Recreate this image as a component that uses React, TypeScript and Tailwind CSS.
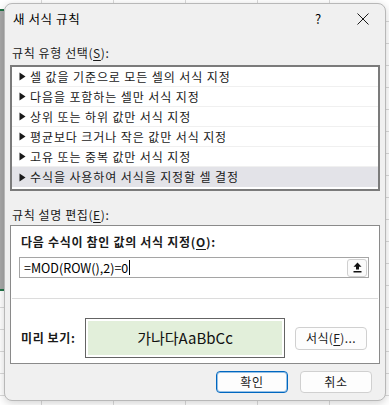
import React from "react";

const rows = [
  "셀 값을 기준으로 모든 셀의 서식 지정",
  "다음을 포함하는 셀만 서식 지정",
  "상위 또는 하위 값만 서식 지정",
  "평균보다 크거나 작은 값만 서식 지정",
  "고유 또는 중복 값만 서식 지정",
  "수식을 사용하여 서식을 지정할 셀 결정",
];

function Tri() {
  return (
    <svg width="7" height="9" viewBox="0 0 7 9" className="shrink-0">
      <path d="M0.5 0.5 L6.5 4.5 L0.5 8.5 Z" fill="#1a1a1a" />
    </svg>
  );
}

export default function App() {
  return (
    <div className="relative w-[389px] h-[405px] overflow-hidden bg-white bg-[linear-gradient(to_right,#dadada_1px,transparent_1px),linear-gradient(to_bottom,#dadada_1px,transparent_1px)] bg-[size:72px_22px] bg-[position:41px_21px] pt-[3px] pl-[4px] font-['Noto_Sans_CJK_KR','Noto_Sans',sans-serif] text-[12px] text-[#1a1a1a]">
      <div className="absolute left-0 top-[9px] w-[4px] h-[282px] bg-[#a8a8a8] border-y-2 border-[#217346]" />
      <div className="relative w-[382px] h-[398px] rounded-[8px] border border-[#b8b8b8] bg-[#f0f0f0] shadow-[0_2px_8px_rgba(0,0,0,0.18)] flex flex-col">
        {/* title bar */}
        <div className="h-[30px] flex items-center shrink-0">
          <span className="pl-[8px] leading-[16px] text-[12.5px] tracking-[0.6px] text-black">새 서식 규칙</span>
          <div className="ml-auto flex items-center h-full">
            <span className="w-[20px] text-center leading-[16px] text-[13px] text-black">?</span>
            <div className="w-[45px] ml-[12px] h-full flex items-center justify-center">
              <svg width="12" height="12" viewBox="0 0 12 12">
                <path d="M0.5 0.5 L11.5 11.5 M11.5 0.5 L0.5 11.5" stroke="#1a1a1a" strokeWidth="1" />
              </svg>
            </div>
          </div>
        </div>

        <div className="px-[5px] flex flex-col">
          <div className="mt-[11px] ml-[2px] leading-[16px] tracking-[0.6px]">
            규칙 유형 선택(<span className="underline underline-offset-2">S</span>):
          </div>
          <div className="mt-[4px] h-[126px] border-2 border-[#7b7b7b] bg-white flex flex-col">
            {rows.map((r, i) => (
              <div
                key={r}
                className={
                  i === rows.length - 1
                    ? "h-[20px] flex items-center gap-[4px] pl-[7px] bg-[#e3e3e8]"
                    : "h-[20px] flex items-center gap-[4px] pl-[7px] border-b border-[#f0f0f0]"
                }
              >
                <Tri />
                <span className="leading-[16px] tracking-[0.9px]">{r}</span>
              </div>
            ))}
          </div>

          <div className="mt-[16px] ml-[2px] leading-[16px] tracking-[0.6px]">
            규칙 설명 편집(<span className="underline underline-offset-2">E</span>):
          </div>
          <div className="mt-[2px] h-[139px] border border-[#8a8a8a] bg-white flex flex-col">
            <div className="pt-[8px] pl-[10px] leading-[16px] font-bold tracking-[0.7px]">
              다음 수식이 참인 값의 서식 지정(<span className="underline underline-offset-2">O</span>):
            </div>
            <div className="mt-[7px] ml-[8px] mr-[10px] h-[21px] border border-[#a5a5a5] flex items-center">
              <span className="pl-[4px] leading-[16px] text-[12.5px] text-black">=MOD(ROW(),2)=0</span>
              <span className="w-px h-[15px] bg-black ml-[1px]" />
              <div className="ml-auto mr-[1px] w-[20px] h-[18px] rounded-[3px] border border-[#d0d0d0] bg-[#fbfbfb] flex items-center justify-center">
                <svg width="9" height="11" viewBox="0 0 9 11">
                  <path d="M4.5 0.5 L8.5 4.8 L6 4.8 L6 7.6 L3 7.6 L3 4.8 L0.5 4.8 Z" fill="#111" />
                  <rect x="0.5" y="9" width="8" height="1.5" fill="#111" />
                </svg>
              </div>
            </div>
            <div className="mt-[20px] mx-[1px] h-px bg-[#dcdcdc]" />
            <div className="mt-[19px] flex items-center">
              <span className="pl-[10px] w-[74px] leading-[16px] font-bold tracking-[0.6px]">미리 보기:</span>
              <div className="w-[200px] h-[40px] border border-[#646464] bg-white p-[2px]">
                <div className="w-full h-full bg-[#e2efda] flex items-center justify-center text-[15px] leading-[18px] text-[#111]">
                  가나다AaBbCc
                </div>
              </div>
              <div className="ml-[10px] w-[72px] h-[23px] rounded-[4px] border border-[#d0d0d0] bg-[#fdfdfd] flex items-center justify-center leading-[16px] tracking-[0.4px]">
                서식(<span className="underline underline-offset-2">F</span>)...
              </div>
            </div>
          </div>

          <div className="mt-[7px] flex justify-end gap-[12px] pr-[8px]">
            <div className="w-[72px] h-[22px] rounded-[4px] border border-[#0067c0] ring-1 ring-inset ring-[#0067c0]/40 bg-[#fdfdfd] flex items-center justify-center leading-[16px] tracking-[0.6px]">
              확인
            </div>
            <div className="w-[72px] h-[22px] rounded-[4px] border border-[#d0d0d0] bg-[#fdfdfd] flex items-center justify-center leading-[16px] tracking-[0.6px]">
              취소
            </div>
          </div>
        </div>
      </div>
    </div>
  );
}
